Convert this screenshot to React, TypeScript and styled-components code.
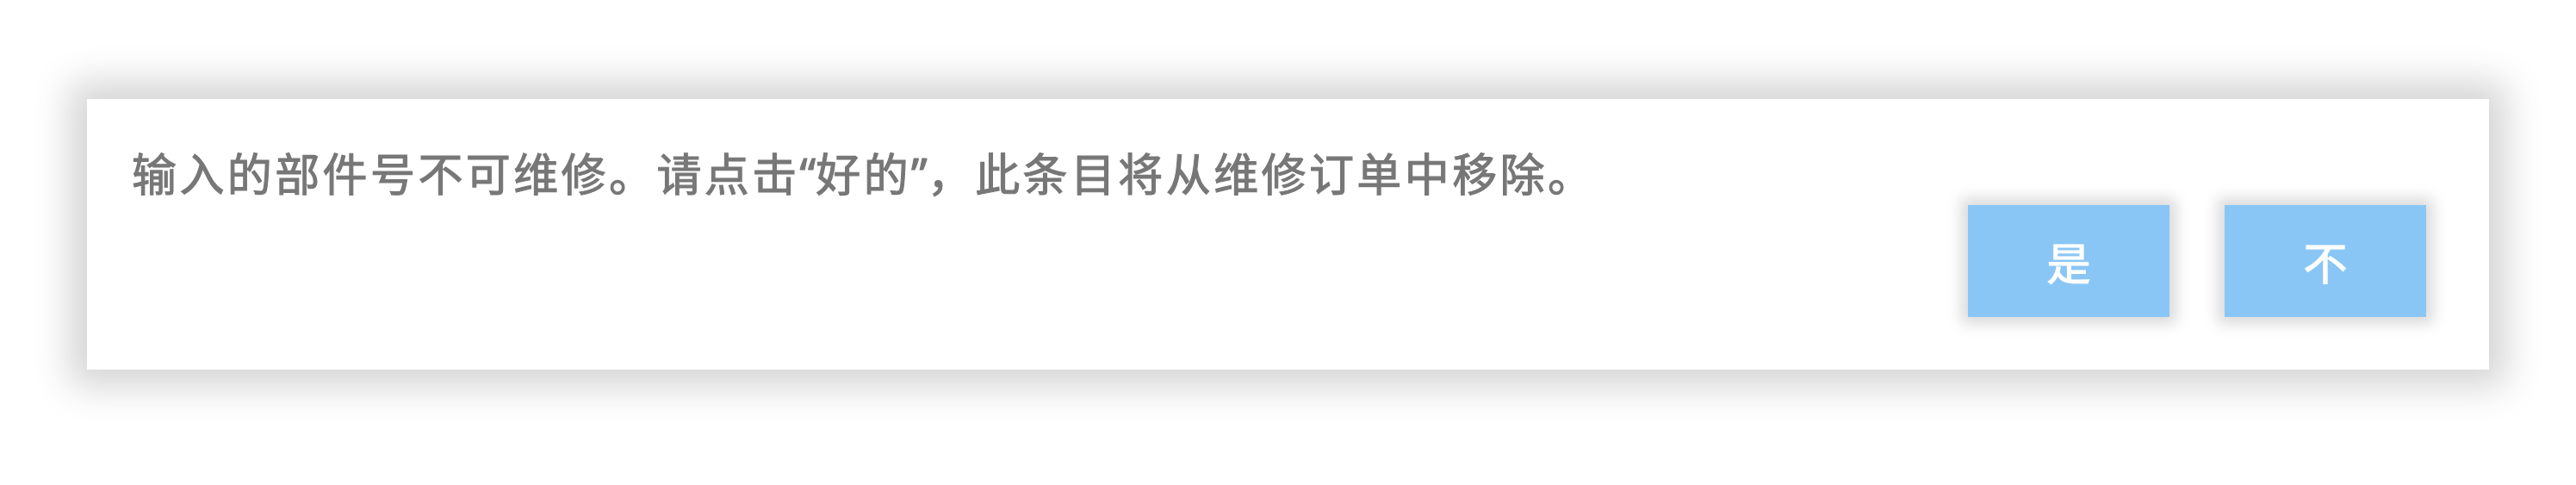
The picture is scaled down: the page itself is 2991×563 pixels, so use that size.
import React from "react";
import styled, { createGlobalStyle } from "styled-components";

const GlobalStyle = createGlobalStyle`
  html, body {
    margin: 0;
    padding: 0;
    background: #ffffff;
  }
  body {
    font-family: "Noto Sans CJK SC", "Noto Sans", sans-serif;
  }
`;

const Page = styled.div`
  width: 2991px;
  height: 563px;
  box-sizing: border-box;
  padding: 115px 101px 0 101px;
`;

const Dialog = styled.div`
  display: flex;
  flex-direction: column;
  box-sizing: border-box;
  height: 314px;
  padding: 59px 73px 0 52px;
  background: #ffffff;
  box-shadow: 0 0 40px 20px rgba(0, 0, 0, 0.17);
`;

const Message = styled.p`
  margin: 0;
  font-size: 52px;
  line-height: 52px;
  font-weight: 400;
  letter-spacing: 3.4px;
  color: #777777;
  -webkit-text-stroke: 1.1px #777777;
  white-space: nowrap;
`;

// latin-width curly quotes sit tight against the characters
const Quote = styled.span`
  font-family: "Noto Sans", "Liberation Sans", sans-serif;
  letter-spacing: 0;
`;

const Actions = styled.div`
  display: flex;
  justify-content: flex-end;
  gap: 64px;
  margin-top: 10px;
`;

const Button = styled.button<{ $tone?: string }>`
  width: 234px;
  height: 130px;
  border: none;
  padding: 0;
  background: ${(p) => p.$tone ?? "#8ac6f5"};
  color: #ffffff;
  font-family: "Noto Sans CJK SC", "Noto Sans", sans-serif;
  font-size: 51px;
  font-weight: 400;
  -webkit-text-stroke: 1.2px #ffffff;
  line-height: 1;
  box-shadow: 0 0 16px 8px rgba(0, 0, 0, 0.15);
  cursor: pointer;
`;

const App = () => {
  return (
    <>
      <GlobalStyle />
      <Page>
        <Dialog>
          <Message>
            输入的部件号不可维修。请点击<Quote>“</Quote>好的<Quote>”</Quote>，此条目将从维修订单中移除。
          </Message>
          <Actions>
            <Button>是</Button>
            <Button>不</Button>
          </Actions>
        </Dialog>
      </Page>
    </>
  );
};

export default App;
